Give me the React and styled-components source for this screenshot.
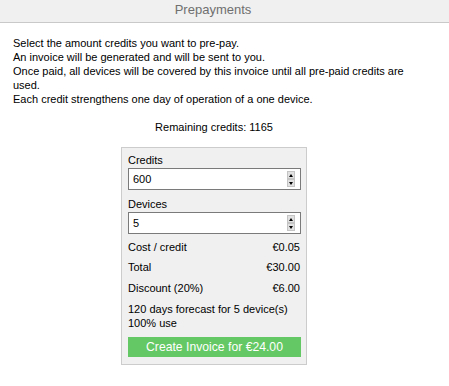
import React, { useState } from "react";
import styled, { createGlobalStyle } from "styled-components";

const GlobalStyle = createGlobalStyle`
  html, body { margin: 0; padding: 0; background: #fff; }
  body {
    font-family: "Liberation Sans", Arial, sans-serif;
    font-size: 11px;
    color: #000;
  }
`;

const Header = styled.div`
  height: 19px;
  line-height: 19px;
  padding: 0 23px 3px 0;
  background: #f0f0f0;
  border-bottom: 1px solid #c9c9c9;
  text-align: center;
  font-size: 13px;
  color: #6f6f6f;
`;

const Content = styled.div`
  width: 402px;
  padding: 13px 0 20px 13px;
`;

const Intro = styled.p`
  margin: 0;
  line-height: 14px;
`;

const Remaining = styled.div`
  margin-top: 14px;
  line-height: 14px;
  text-align: center;
`;

const Panel = styled.div`
  box-sizing: border-box;
  width: 186px;
  margin: 13px auto 0;
  padding: 5px 5px 7px 6px;
  background: #f0f0f0;
  border: 1px solid #cccccc;
  display: flex;
  flex-direction: column;
`;

const Label = styled.label`
  display: block;
  line-height: 14px;
  margin-top: ${(p) => p.$mt || 0}px;
`;

const InputBox = styled.div`
  box-sizing: border-box;
  height: 22px;
  margin-top: 1px;
  display: flex;
  align-items: center;
  padding: 0 5px 0 4px;
  background: #fff;
  border: 1px solid #7a7a7a;
`;

const TextInput = styled.input`
  flex: 1;
  min-width: 0;
  border: none;
  outline: none;
  padding: 0;
  background: transparent;
  font: inherit;
  color: #000;
`;

const Spinner = styled.div`
  display: flex;
  flex-direction: column;
  width: 8px;
  height: 16px;
`;

const SpinBtn = styled.div`
  flex: 1;
  box-sizing: border-box;
  background: #e1e1e1;
  border: 1px solid #c4c4c4;
  display: flex;
  align-items: center;
  justify-content: center;
  &::after {
    content: "";
    width: 0;
    height: 0;
    border-left: 2.5px solid transparent;
    border-right: 2.5px solid transparent;
    ${(p) =>
      p.$down
        ? "border-top: 3px solid #000;"
        : "border-bottom: 3px solid #000;"}
  }
`;

const Row = styled.div`
  display: flex;
  justify-content: space-between;
  line-height: 14px;
  margin-top: ${(p) => p.$mt}px;
  padding-right: 1px;
`;

const Note = styled.div`
  line-height: 14px;
  margin-top: 7px;
`;

const CreateButton = styled.button`
  margin-top: 7px;
  height: 20px;
  border: none;
  padding: 0;
  background: #64c964;
  color: #fff;
  font-family: "Liberation Sans", Arial, sans-serif;
  font-size: 12.2px;
  cursor: pointer;
`;

function NumberField({ label, value, onChange, mt }) {
  return (
    <>
      <Label $mt={mt}>{label}</Label>
      <InputBox>
        <TextInput value={value} onChange={(e) => onChange(e.target.value)} />
        <Spinner>
          <SpinBtn onClick={() => onChange(String(Number(value) + 1))} />
          <SpinBtn $down onClick={() => onChange(String(Math.max(0, Number(value) - 1)))} />
        </Spinner>
      </InputBox>
    </>
  );
}

export default function App() {
  const [credits, setCredits] = useState("600");
  const [devices, setDevices] = useState("5");
  const c = Number(credits) || 0;
  const d = Number(devices) || 0;
  const cost = 0.05;
  const total = c * cost;
  const discount = total * 0.2;
  const days = d > 0 ? Math.floor(c / d) : 0;

  return (
    <>
      <GlobalStyle />
      <Header>Prepayments</Header>
      <Content>
        <Intro>
          Select the amount credits you want to pre-pay.
          <br />
          An invoice will be generated and will be sent to you.
          <br />
          Once paid, all devices will be covered by this invoice until all pre-paid credits are used.
          <br />
          Each credit strengthens one day of operation of a one device.
        </Intro>
        <Remaining>Remaining credits: 1165</Remaining>
        <Panel>
          <NumberField label="Credits" value={credits} onChange={setCredits} />
          <NumberField label="Devices" value={devices} onChange={setDevices} mt={7} />
          <Row $mt={6}>
            <span>Cost / credit</span>
            <span>€{cost.toFixed(2)}</span>
          </Row>
          <Row $mt={6}>
            <span>Total</span>
            <span>€{total.toFixed(2)}</span>
          </Row>
          <Row $mt={7}>
            <span>Discount (20%)</span>
            <span>€{discount.toFixed(2)}</span>
          </Row>
          <Note>
            {days} days forecast for {d} device(s)
            <br />
            100% use
          </Note>
          <CreateButton>Create Invoice for €{(total - discount).toFixed(2)}</CreateButton>
        </Panel>
      </Content>
    </>
  );
}
